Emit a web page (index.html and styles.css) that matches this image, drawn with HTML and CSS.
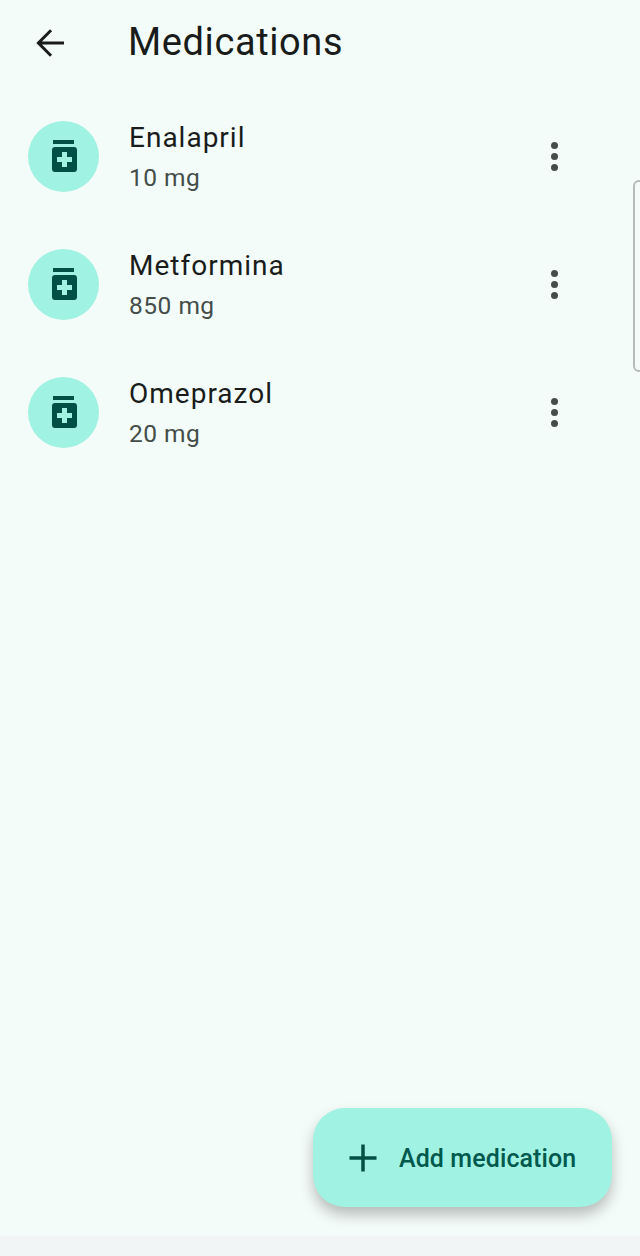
FILE: index.html
```html
<!DOCTYPE html>
<html lang="en">
<head>
    <meta charset="UTF-8">
    <meta content="width=device-width, initial-scale=1.0" name="viewport">
    <title>Medications</title>
    <link rel="stylesheet" href="styles.css">
</head>
<body>
<div class="screen">
    <header class="app-bar">
        <button class="back" aria-label="Back">
            <svg width="42" height="42" viewBox="0 0 24 24"><path d="M20 11.150H7.400l5.800-5.800L12 4.150l-7.850 7.850L12 19.850l1.200-1.200-5.800-5.800H20z"/></svg>
        </button>
        <h1>Medications</h1>
    </header>

    <ul class="med-list">
        <li class="med">
            <div class="avatar">
                <svg width="40" height="40" viewBox="0 0 40 40"><path d="M9 4h21v4H9z"/><path fill-rule="evenodd" d="M11 11h19a3 3 0 0 1 3 3v19a3 3 0 0 1-3 3H11a3 3 0 0 1-3-3V14a3 3 0 0 1 3-3zm7 5v5h-5v5h5v5h5v-5h5v-5h-5v-5z"/></svg>
            </div>
            <div class="med-text">
                <span class="med-name">Enalapril</span>
                <small class="med-dose">10 mg</small>
            </div>
            <div class="more"><i></i><i></i><i></i></div>
        </li>
        <li class="med">
            <div class="avatar">
                <svg width="40" height="40" viewBox="0 0 40 40"><path d="M9 4h21v4H9z"/><path fill-rule="evenodd" d="M11 11h19a3 3 0 0 1 3 3v19a3 3 0 0 1-3 3H11a3 3 0 0 1-3-3V14a3 3 0 0 1 3-3zm7 5v5h-5v5h5v5h5v-5h5v-5h-5v-5z"/></svg>
            </div>
            <div class="med-text">
                <span class="med-name">Metformina</span>
                <small class="med-dose">850 mg</small>
            </div>
            <div class="more"><i></i><i></i><i></i></div>
        </li>
        <li class="med">
            <div class="avatar">
                <svg width="40" height="40" viewBox="0 0 40 40"><path d="M9 4h21v4H9z"/><path fill-rule="evenodd" d="M11 11h19a3 3 0 0 1 3 3v19a3 3 0 0 1-3 3H11a3 3 0 0 1-3-3V14a3 3 0 0 1 3-3zm7 5v5h-5v5h5v5h5v-5h5v-5h-5v-5z"/></svg>
            </div>
            <div class="med-text">
                <span class="med-name">Omeprazol</span>
                <small class="med-dose">20 mg</small>
            </div>
            <div class="more"><i></i><i></i><i></i></div>
        </li>
    </ul>

    <button class="fab">
        <svg width="36" height="36" viewBox="0 0 36 36"><path d="M16.250 4.500h3.500v11.750H31.500v3.500H19.750V31.500h-3.500V19.750H4.500v-3.500h11.750z"/></svg>
        <span>Add medication</span>
    </button>

    <div class="side-handle"></div>
</div>
<div class="nav-strip"></div>
</body>
</html>
```

FILE: styles.css
```css
body {
    font-family: Roboto, sans-serif;
    margin: 0;
    padding: 0;
    background-color: #f1f5f6;
    color: #191c1b;
}

.screen {
    position: relative;
    display: flex;
    flex-direction: column;
    height: 1236px;
    background-color: #f4fcf9;
    box-sizing: border-box;
    padding-bottom: 29px;
}

.app-bar {
    display: flex;
    align-items: center;
    height: 84px;
    flex-shrink: 0;
}

.back {
    display: flex;
    align-items: center;
    justify-content: center;
    width: 48px;
    height: 48px;
    margin-left: 26px;
    padding: 2px 0 0;
    border: 0;
    background: none;
}

.back svg {
    fill: #191c1b;
}

h1 {
    margin: 0 0 0 54px;
    font-size: 38px;
    font-weight: 400;
    line-height: 48px;
    letter-spacing: 0.6px;
}

.med-list {
    flex: 1;
    list-style: none;
    margin: 8px 0 0;
    padding: 0;
}

.med {
    display: flex;
    align-items: center;
    height: 128px;
    padding-left: 28px;
}

.avatar {
    display: flex;
    align-items: center;
    justify-content: center;
    width: 71px;
    height: 71px;
    border-radius: 50%;
    background: #a0f2e2;
    flex-shrink: 0;
}

.avatar svg {
    fill: #005046;
}

.med-text {
    flex: 1;
    display: flex;
    flex-direction: column;
    margin-left: 30px;
    padding-top: 2px;
}

.med-name {
    font-size: 28px;
    line-height: 41px;
    letter-spacing: 1px;
}

.med-dose {
    font-size: 24.5px;
    line-height: 40px;
    letter-spacing: 0.5px;
    color: #444d4a;
}

.more {
    display: flex;
    flex-direction: column;
    gap: 4px;
    margin-right: 82px;
}

.more i {
    display: block;
    width: 7px;
    height: 7px;
    border-radius: 50%;
    background: #444d4a;
}

.fab {
    display: flex;
    align-items: center;
    align-self: flex-end;
    width: 299px;
    height: 99px;
    margin-right: 28px;
    padding: 0 0 0 32px;
    border: 0;
    border-radius: 32px;
    background: #a0f2e2;
    box-shadow: 0 8px 14px rgba(0, 0, 0, 0.25);
    font-family: inherit;
    color: #00594d;
    flex-shrink: 0;
}

.fab svg {
    fill: #005046;
}

.fab span {
    margin: 2px 0 0 18px;
    font-size: 25px;
    font-weight: 500;
    letter-spacing: 0.1px;
}

.side-handle {
    position: absolute;
    left: 633px;
    top: 180px;
    width: 12px;
    height: 192px;
    box-sizing: border-box;
    border: 2px solid #b5bcba;
    border-radius: 8px;
}

.nav-strip {
    height: 20px;
}
```
